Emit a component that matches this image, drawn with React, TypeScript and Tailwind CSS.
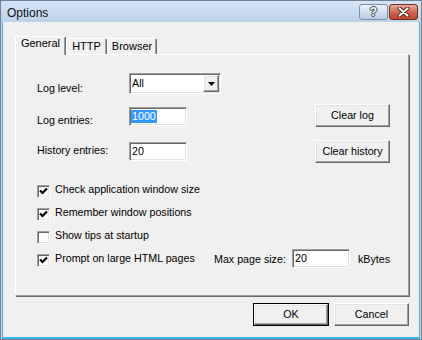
import React from "react";

const sunken =
  "bg-white border border-t-[#a0a0a0] border-l-[#a0a0a0] border-b-white border-r-white shadow-[inset_1px_1px_0_#696969,inset_-1px_-1px_0_#e3e3e3]";
const raised =
  "bg-[#f0f0f0] border border-t-white border-l-white border-b-[#696969] border-r-[#696969] shadow-[inset_-1px_-1px_0_#a0a0a0,inset_1px_1px_0_#e3e3e3]";

function Check({ checked }: { checked: boolean }) {
  return (
    <div className={`w-[13px] h-[13px] shrink-0 ${sunken} flex items-center justify-center`}>
      {checked && (
        <svg width="9" height="9" viewBox="0 0 9 9">
          <path d="M1 3.5 L3.5 6 L8 1.5" fill="none" stroke="#000" strokeWidth="2.2" />
        </svg>
      )}
    </div>
  );
}

function CheckRow({ checked, label, className = "" }: { checked: boolean; label: string; className?: string }) {
  return (
    <div className={`flex items-start h-[13px] pl-[21px] ${className}`}>
      <Check checked={checked} />
      <span className="ml-[5px] -mt-[2px] leading-[13px] whitespace-nowrap">{label}</span>
    </div>
  );
}

function Btn({ label, className = "" }: { label: string; className?: string }) {
  return (
    <div className={`w-[75px] h-[23px] ${raised} flex items-center justify-center leading-[13px] ${className}`}>
      {label}
    </div>
  );
}

export default function App() {
  return (
    <div className="w-[422px] h-[340px] flex flex-col bg-[#c6d9ee] border border-[#6f8297] font-['Liberation_Sans',Arial,sans-serif] text-[10.7px] text-black overflow-hidden">
      {/* Title bar */}
      <div className="h-[21px] flex items-start justify-between bg-gradient-to-b from-[#d6e4f4] to-[#bcd2ea] pr-[3px]">
        <span className="pl-[6px] pt-[5px] text-[12px] leading-[14px] text-[#111]">Options</span>
        <div className="flex gap-[1px] mt-[3px]">
          <div className="w-[29px] h-[16px] rounded-[3px] border border-[#7c8ea6] bg-gradient-to-b from-[#eef3fa] to-[#b9cbe2] flex items-center justify-center">
            <span className="font-bold text-[12px] leading-[12px] text-white [text-shadow:0_0_1px_#2c3b4f,1px_0_0_#3b4b60,-1px_0_0_#3b4b60,0_1px_0_#3b4b60,0_-1px_0_#3b4b60]">
              ?
            </span>
          </div>
          <div className="w-[29px] h-[16px] rounded-[3px] border border-[#6b3227] bg-gradient-to-b from-[#e9a898] via-[#d16a55] to-[#c4412b] flex items-center justify-center">
            <svg width="13" height="10" viewBox="0 0 13 10">
              <path d="M2.5 1.5 L10.5 8.5 M10.5 1.5 L2.5 8.5" stroke="#4a1d16" strokeWidth="4" strokeLinecap="round" />
              <path d="M2.5 1.5 L10.5 8.5 M10.5 1.5 L2.5 8.5" stroke="#fff" strokeWidth="2.2" strokeLinecap="round" />
            </svg>
          </div>
        </div>
      </div>

      {/* Body */}
      <div className="flex-1 flex flex-col ml-[1px] mr-[1px] bg-[#f0f0f0] border-l border-r border-b-2 border-l-[#5aa7d8] border-r-[#5aa7d8] border-b-[#38b6e6]">
        {/* Tabs */}
        <div className="flex items-end h-[18px] mt-[14px] ml-[12px] text-[11px]">
          <div className="relative z-10 w-[51px] h-[19px] -mb-[1px] bg-[#f0f0f0] border-t border-l border-r border-t-white border-l-white border-r-[#696969] shadow-[inset_-1px_0_0_#a0a0a0] rounded-t-[2px] flex justify-center">
            <span className="leading-[13px]">General</span>
          </div>
          <div className="w-[41px] h-[16px] border-t border-l border-r border-t-white border-l-white border-r-[#696969] shadow-[inset_-1px_0_0_#a0a0a0] rounded-t-[2px] flex justify-center pt-[1px]">
            <span className="leading-[13px]">HTTP</span>
          </div>
          <div className="w-[50px] h-[16px] border-t border-l border-r border-t-white border-l-white border-r-[#696969] shadow-[inset_-1px_0_0_#a0a0a0] rounded-t-[2px] flex justify-center pt-[1px]">
            <span className="leading-[13px]">Browser</span>
          </div>
        </div>

        {/* Panel */}
        <div className="ml-[12px] w-[394px] h-[242px] bg-[#f0f0f0] border border-t-white border-l-white border-b-[#a0a0a0] border-r-[#a0a0a0] shadow-[1px_1px_0_#696969] flex flex-col">
          {/* Row 1 */}
          <div className="flex items-start h-[21px] mt-[18px] pl-[21px]">
            <span className="w-[92px] mt-[9px] leading-[13px]">Log level:</span>
            <div className={`w-[92px] h-[21px] ${sunken} flex items-center justify-between pr-[1px]`}>
              <span className="pl-[2px] leading-[13px]">All</span>
              <div className={`w-[16px] h-[17px] ${raised} flex items-center justify-center`}>
                <svg width="7" height="4" viewBox="0 0 7 4">
                  <path d="M0 0 H7 L3.5 4 Z" fill="#000" />
                </svg>
              </div>
            </div>
          </div>

          {/* Row 2 */}
          <div className="flex items-start h-[23px] mt-[10px] pl-[21px]">
            <span className="w-[92px] mt-[10px] leading-[13px]">Log entries:</span>
            <div className={`w-[58px] h-[19px] mt-[3px] ${sunken} flex items-center pl-[1px]`}>
              <span className="bg-[#3399ff] text-white leading-[13px] px-[1px]">1000</span>
            </div>
            <Btn label="Clear log" className="ml-[128px]" />
          </div>

          {/* Row 3 */}
          <div className="flex items-start h-[23px] mt-[13px] pl-[21px]">
            <span className="w-[92px] mt-[4px] leading-[13px]">History entries:</span>
            <div className={`w-[58px] h-[19px] mt-[2px] ${sunken} flex items-center pl-[2px]`}>
              <span className="leading-[13px]">20</span>
            </div>
            <Btn label="Clear history" className="ml-[128px]" />
          </div>

          <CheckRow checked label="Check application window size" className="mt-[22px]" />
          <CheckRow checked label="Remember window positions" className="mt-[10px]" />
          <CheckRow checked={false} label="Show tips at startup" className="mt-[10px]" />

          {/* Row 4 */}
          <div className="flex items-start h-[19px] mt-[5px] pl-[21px]">
            <div className="w-[177px] flex items-start">
              <div className="mt-[5px]">
                <Check checked />
              </div>
              <span className="ml-[5px] mt-[3px] leading-[13px] whitespace-nowrap">Prompt on large HTML pages</span>
            </div>
            <span className="w-[78px] mt-[4px] leading-[13px] whitespace-nowrap">Max page size:</span>
            <div className={`w-[58px] h-[19px] ${sunken} flex items-center pl-[2px]`}>
              <span className="leading-[13px]">20</span>
            </div>
            <span className="ml-[8px] mt-[4px] leading-[13px]">kBytes</span>
          </div>
        </div>

        {/* Bottom buttons */}
        <div className="flex justify-end gap-[5px] mt-[7px] pr-[10px]">
          <div className="w-[76px] h-[23px] border border-black">
            <div className={`w-full h-full ${raised} flex items-center justify-center leading-[13px]`}>OK</div>
          </div>
          <Btn label="Cancel" />
        </div>
      </div>
    </div>
  );
}
